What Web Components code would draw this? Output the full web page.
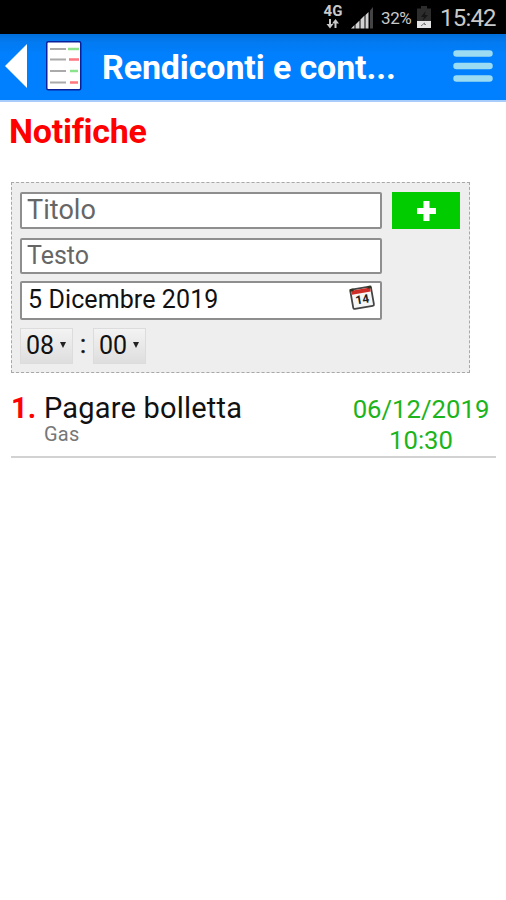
<!DOCTYPE html>
<html lang="it">
<head>
<meta charset="utf-8">
<title>Notifiche</title>
<style>
html,body{margin:0;background:#fff}
body{width:506px;height:900px;overflow:hidden;font-family:Roboto,"Liberation Sans",sans-serif;color:#111}
</style>
</head>
<body>
<notify-app></notify-app>
<script>
function define(name, html, setup){
  const t=document.createElement('template');
  t.innerHTML=html;
  customElements.define(name, class extends HTMLElement{
    connectedCallback(){
      if(this.shadowRoot) return;
      this.attachShadow({mode:'open'}).append(t.content.cloneNode(true));
      if(setup) setup(this,this.shadowRoot);
    }
  });
}

define('status-bar', `<style>
:host{display:flex;height:34px;background:#000;color:#c9c9c9;box-sizing:border-box;padding-right:10px;justify-content:flex-end;align-items:flex-start}
.net{width:22px;display:flex;flex-direction:column;align-items:center;margin-right:6px;padding-top:4px}
.net span{font:bold 15px/15px Roboto,sans-serif;height:15px}
.sig{margin:6px 7px 0 0}
.pct{font-size:17px;line-height:20px;margin-top:8px;width:32px;white-space:nowrap;letter-spacing:-.4px}
.bat{margin:6px 9px 0 4px}
.time{font-size:24px;line-height:28px;margin-top:4px;width:56px;white-space:nowrap;letter-spacing:-.8px}
svg{display:block}
</style>
<div class="net"><span>4G</span><svg width="14" height="10" viewBox="0 0 14 10"><path d="M4 0v7M9.500 9V2" fill="none" stroke="#c9c9c9" stroke-width="2"/><path d="M.5 5h7L4 9.500zM6 4.500h7L9.500 0z" fill="#c9c9c9"/></svg></div>
<svg class="sig" width="24" height="24" viewBox="0 0 24 24"><path d="M1 22.500 4.500 19v3.500zM5.500 18.500l4-4v8h-4zM10.500 13.500l4-4v13h-4zM15.500 9 18.500 6v16.500h-3z" fill="#d2d2d2"/><path d="M20 4.500 23 1v21.500h-3z" fill="#444"/></svg>
<span class="pct">32%</span>
<svg class="bat" width="14" height="23" viewBox="0 0 14 23"><path d="M4 0h6v2.500h4V15H0V2.500h4z" fill="#2d2d2d"/><path d="M8.500 5 4 11h3l-1.500 4L11 9H8z" fill="#161616"/><path d="M0 15h14v7H0z" fill="#e3e3e3"/><path d="m4 20 3.500-3v1.500H9" fill="none" stroke="#777"/></svg>
<span class="time">15:42</span>`);

define('app-header', `<style>
:host{display:flex;height:68px;box-sizing:border-box;background:linear-gradient(#006edb,#037af0 8px,#0080ff 22px);border-bottom:2px solid #a9cdfb;color:#fff;align-items:flex-start;padding-left:5px}
svg{display:block;flex:none}
.back{margin-top:10px}
.doc{margin:7px 0 0 19px}
h1{margin:12px 0 0 20px;font-size:34px;line-height:42px;font-weight:700;flex:1;white-space:nowrap;letter-spacing:-.12px}
.menu{margin:16px 13px 0 0}
</style>
<svg class="back" width="22" height="44" viewBox="0 0 22 44"><path d="M0 22 22 0v44z" fill="#fff"/></svg>
<svg class="doc" width="36" height="50" viewBox="0 0 36 50"><rect x=".75" y=".75" width="34" height="48" rx="1.500" fill="#fff" stroke="#0a209a" stroke-width="1.500"/><path d="M4 8h16M4 18.500h16M4 30h16M4 41.500h16" stroke="#aaa" stroke-width="2"/><path d="M22 8h11M24 30h8" stroke="#8be38b" stroke-width="2.500"/><path d="M23 18.500h10M24 41.500h8" stroke="#ff7580" stroke-width="2.500"/></svg>
<h1><slot></slot></h1>
<svg class="menu" width="40" height="34" viewBox="0 0 40 34"><path d="M3.500 3.500h33M3.500 16h33M3.500 28.500h33" stroke="#9cdcf2" stroke-width="6.500" stroke-linecap="round"/></svg>`);

define('field-box', `<style>
:host{display:flex;box-sizing:border-box;width:362px;height:var(--h,36px);border:2px solid #8e8e8e;border-radius:2px;background:#fff;align-items:center;padding-left:var(--pl,5px);color:var(--c,#666);font-size:var(--fs,26px);letter-spacing:var(--ls,0);white-space:nowrap;justify-content:space-between}
span{margin-top:-2px}
</style><span><slot></slot></span><slot name="icon"></slot>`);

define('calendar-icon', `<style>:host{display:block;margin:-6px 4px 0 0}svg{display:block}</style>
<svg width="27" height="25" viewBox="0 0 27 25"><g transform="rotate(-10 13 12)"><rect x="2.500" y="3" width="21" height="19.500" rx="1.500" fill="#f6f6f6" stroke="#444" stroke-width="1.800"/><path d="M3.500 4h19v4h-19z" fill="#cf2d27"/><path d="M2 3.500h4M20 3.500h4" stroke="#332" stroke-width="2.500"/><text x="13" y="18.500" text-anchor="middle" font-family="Roboto,sans-serif" font-size="12" font-weight="700" fill="#222">14</text></g></svg>`);

define('time-select', `<style>
:host{display:flex;box-sizing:border-box;width:53px;height:36px;border:1px solid #dcdcdc;background:linear-gradient(#f3f3f3,#dedede);align-items:center;padding-left:5px;font-size:25px;color:#111}
span{margin-top:-2px}
svg{display:block;margin:-3px 0 0 6px}
</style><span><slot></slot></span><svg width="6" height="6" viewBox="0 0 6 6"><path d="M0 0h6L3 6z" fill="#222"/></svg>`);

define('add-button', `<style>
:host{display:flex;width:68px;height:37px;background:#0c0;align-items:center;justify-content:center}
</style><svg width="19" height="20" viewBox="0 0 19 20"><path d="M6.500 0h6v7H19v6h-6.500v7h-6v-7H0V7h6.500z" fill="#fff"/></svg>`);

define('notify-form', `<style>
:host{display:flex;box-sizing:border-box;width:459px;height:191px;margin:0 0 0 11px;border:1px dashed #a8a8a8;background:#eee;padding:9px 8px;gap:10px;align-items:flex-start}
.col{display:flex;flex-direction:column}
.time{display:flex;margin-top:8px;align-items:center}
.time b{font-size:25px;line-height:30px;margin-top:-2px;font-weight:400;width:20px;text-align:center;-webkit-text-stroke:.5px}
.f1{--h:37px;--fs:27px;--ls:.05px}
.f2{--h:36px;--fs:25px;margin-top:9px}
.f3{--h:39px;--fs:25px;--ls:.1px;--c:#111;--pl:6px;margin-top:7px}
</style>
<div class="col">
<field-box class="f1">Titolo</field-box>
<field-box class="f2">Testo</field-box>
<field-box class="f3">5 Dicembre 2019<calendar-icon slot="icon"></calendar-icon></field-box>
<div class="time"><time-select>08</time-select><b>:</b><time-select>00</time-select></div>
</div>
<add-button></add-button>`);

define('notify-item', `<style>
:host{display:flex;box-sizing:border-box;width:485px;height:66px;margin:19px 0 0 11px;border-bottom:2px solid #d2d2d2;justify-content:space-between}
.num{color:#f00;font-weight:700;font-size:29px;line-height:32px;width:33px}
.main{flex:1;display:flex;flex-direction:column}
.title{font-size:29px;line-height:32px;letter-spacing:.2px;white-space:nowrap}
.title slot{display:block;height:32px}
.sub{font-size:20px;line-height:20px;color:#777;letter-spacing:.2px}
.sub{display:flex;height:20px;align-items:center}
::slotted([slot=sub]){display:block;line-height:20px}
.date{width:150px;text-align:center;color:#1cb41c;font-size:25.700px;line-height:31px;padding-top:2px}
.date div{white-space:nowrap}
</style>
<div class="num"><slot name="num"></slot></div>
<div class="main"><div class="title"><slot></slot></div><div class="sub"><slot name="sub"></slot></div></div>
<div class="date"><div><slot name="day"></slot></div><div><slot name="hour"></slot></div></div>`);

define('notify-app', `<style>
:host{display:flex;flex-direction:column;width:506px;height:900px}
h2{margin:9px 0 30px 9px;font-size:34px;line-height:41px;font-weight:700;color:#f00;white-space:nowrap;letter-spacing:-.25px}
</style>
<status-bar></status-bar>
<app-header>Rendiconti e cont...</app-header>
<h2>Notifiche</h2>
<notify-form></notify-form>
<notify-item><span slot="num">1.</span>Pagare bolletta<span slot="sub">Gas</span><span slot="day">06/12/2019</span><span slot="hour">10:30</span></notify-item>`);
</script>
</body>
</html>
